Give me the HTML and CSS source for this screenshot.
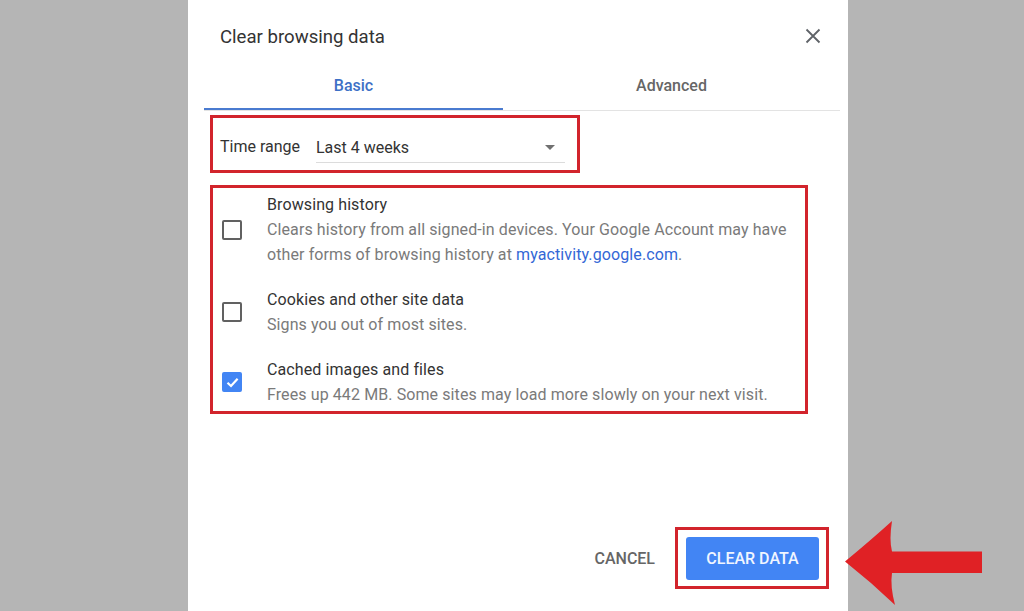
FILE: index.html
```html
<!DOCTYPE html>
<html lang="en">
<head>
  <meta charset="UTF-8" />
  <title>Clear browsing data</title>
  <link rel="stylesheet" href="styles.css">
</head>
<body>

<div class="dialog">
  <div class="header">
    <h1 class="title">Clear browsing data</h1>
    <button class="close" aria-label="Close">
      <svg width="16" height="16" viewBox="0 0 16 16"><path d="M1.5 1.5L14.5 14.5M14.5 1.5L1.5 14.5" stroke="#5f6368" stroke-width="1.8" fill="none"/></svg>
    </button>
  </div>

  <div class="tabs">
    <div class="tab tab-basic active">Basic</div>
    <div class="tab tab-advanced">Advanced</div>
  </div>

  <div class="mark range-box">
    <span class="range-label">Time range</span>
    <div class="select">
      <span>Last 4 weeks</span>
      <span class="caret"></span>
    </div>
  </div>

  <div class="mark options">
    <div class="option">
      <span class="checkbox"></span>
      <div class="option-text">
        <div class="option-title">Browsing history</div>
        <div class="option-desc">Clears history from all signed-in devices. Your Google Account may have other forms of browsing history at <a href="#">myactivity.google.com</a>.</div>
      </div>
    </div>
    <div class="option">
      <span class="checkbox"></span>
      <div class="option-text">
        <div class="option-title">Cookies and other site data</div>
        <div class="option-desc">Signs you out of most sites.</div>
      </div>
    </div>
    <div class="option">
      <span class="checkbox checked">
        <svg width="15" height="15" viewBox="0 0 15 15"><path d="M2.5 7.8L6 11L12.6 3.8" stroke="#fff" stroke-width="2.2" fill="none"/></svg>
      </span>
      <div class="option-text">
        <div class="option-title">Cached images and files</div>
        <div class="option-desc">Frees up 442 MB. Some sites may load more slowly on your next visit.</div>
      </div>
    </div>
  </div>

  <div class="footer">
    <button class="btn-cancel">CANCEL</button>
    <div class="mark btn-box">
      <button class="btn-clear">CLEAR DATA</button>
    </div>
  </div>
</div>

<svg class="arrow" width="144" height="90" viewBox="0 0 144 90">
  <path d="M2 41.5 Q28 20 49 1 Q46 20 49 31.5 L139 31.5 L139 53 L49 53 Q47 66 52 85 Q28 62 2 41.5 Z" fill="#e02125"/>
</svg>

</body>
</html>
```

FILE: styles.css
```css
* { box-sizing: border-box; }
body {
  margin: 0;
  background: #b5b5b5;
  font-family: Roboto, "Liberation Sans", sans-serif;
  height: 611px;
  overflow: hidden;
  position: relative;
}

.dialog {
  margin-left: 188px;
  width: 660px;
  height: 611px;
  background: #fff;
  display: flex;
  flex-direction: column;
}

.header {
  display: flex;
  justify-content: space-between;
  align-items: center;
  padding: 25px 27px 0 32px;
}
.title {
  margin: 0;
  font-size: 18.6px;
  font-weight: 400;
  line-height: 24px;
  color: #333;
}
.close {
  border: none;
  background: none;
  padding: 0;
  width: 16px;
  height: 16px;
  margin-top: -2px;
}

.tabs {
  display: flex;
  margin: 13px 8px 0 16px;
  border-bottom: 1px solid #e3e3e3;
}
.tab {
  height: 48px;
  line-height: 48px;
  text-align: center;
  font-size: 16px;
  font-weight: 500;
  color: #666;
  border-bottom: 2px solid transparent;
}
.tab-basic { width: 299px; }
.tab-advanced { flex: 1; }
.tab.active { color: #3d70c6; border-bottom-color: #4a7bd0; }

.mark { border: 3px solid #d2242c; }

.range-box {
  margin: 4px 0 0 22px;
  width: 370px;
  height: 58px;
  display: flex;
  align-items: center;
  padding: 4px 0 0 7px;
  font-size: 16px;
  color: #333;
}
.range-label { width: 96px; }
.select {
  width: 249px;
  display: flex;
  justify-content: space-between;
  align-items: center;
  padding: 4px 8px 5px 0;
  border-bottom: 1px solid #dcdcdc;
  margin-top: 4px;
}
.caret {
  width: 0;
  height: 0;
  border-left: 5.5px solid transparent;
  border-right: 5.5px solid transparent;
  border-top: 5.5px solid #707070;
  margin-right: 2px;
}

.options {
  margin: 12px 0 0 22px;
  width: 598px;
  height: 229px;
  padding: 4px 10px 4px 9px;
  display: flex;
  flex-direction: column;
  gap: 20px;
}
.option {
  display: flex;
  align-items: center;
}
.checkbox {
  flex: none;
  width: 20px;
  height: 20px;
  border: 2px solid #616161;
  border-radius: 2px;
  margin-right: 25px;
  display: flex;
  align-items: center;
  justify-content: center;
}
.checkbox.checked {
  background: #4285f4;
  border-color: #4285f4;
}
.option-text { font-size: 16px; line-height: 25px; max-width: 528px; letter-spacing: 0.1px; }
.option-title { color: #333; }
.option-desc { color: #7a7a7a; }
.option-desc a { color: #3367d6; text-decoration: none; }

.footer {
  margin-top: auto;
  margin-bottom: 22px;
  margin-right: 19px;
  display: flex;
  justify-content: flex-end;
  align-items: center;
}
.btn-cancel {
  border: none;
  background: none;
  font-family: inherit;
  font-size: 16px;
  font-weight: 500;
  color: #666;
  padding: 0;
  margin-right: 20px;
}
.btn-box {
  width: 154px;
  height: 62px;
  padding: 7px 7px 6px 8px;
}
.btn-clear {
  width: 100%;
  height: 100%;
  border: none;
  border-radius: 3px;
  background: #4285f4;
  color: #f0f5ff;
  font-family: inherit;
  font-size: 16px;
  font-weight: 500;
}

.arrow {
  position: absolute;
  left: 843px;
  top: 520px;
}
```
